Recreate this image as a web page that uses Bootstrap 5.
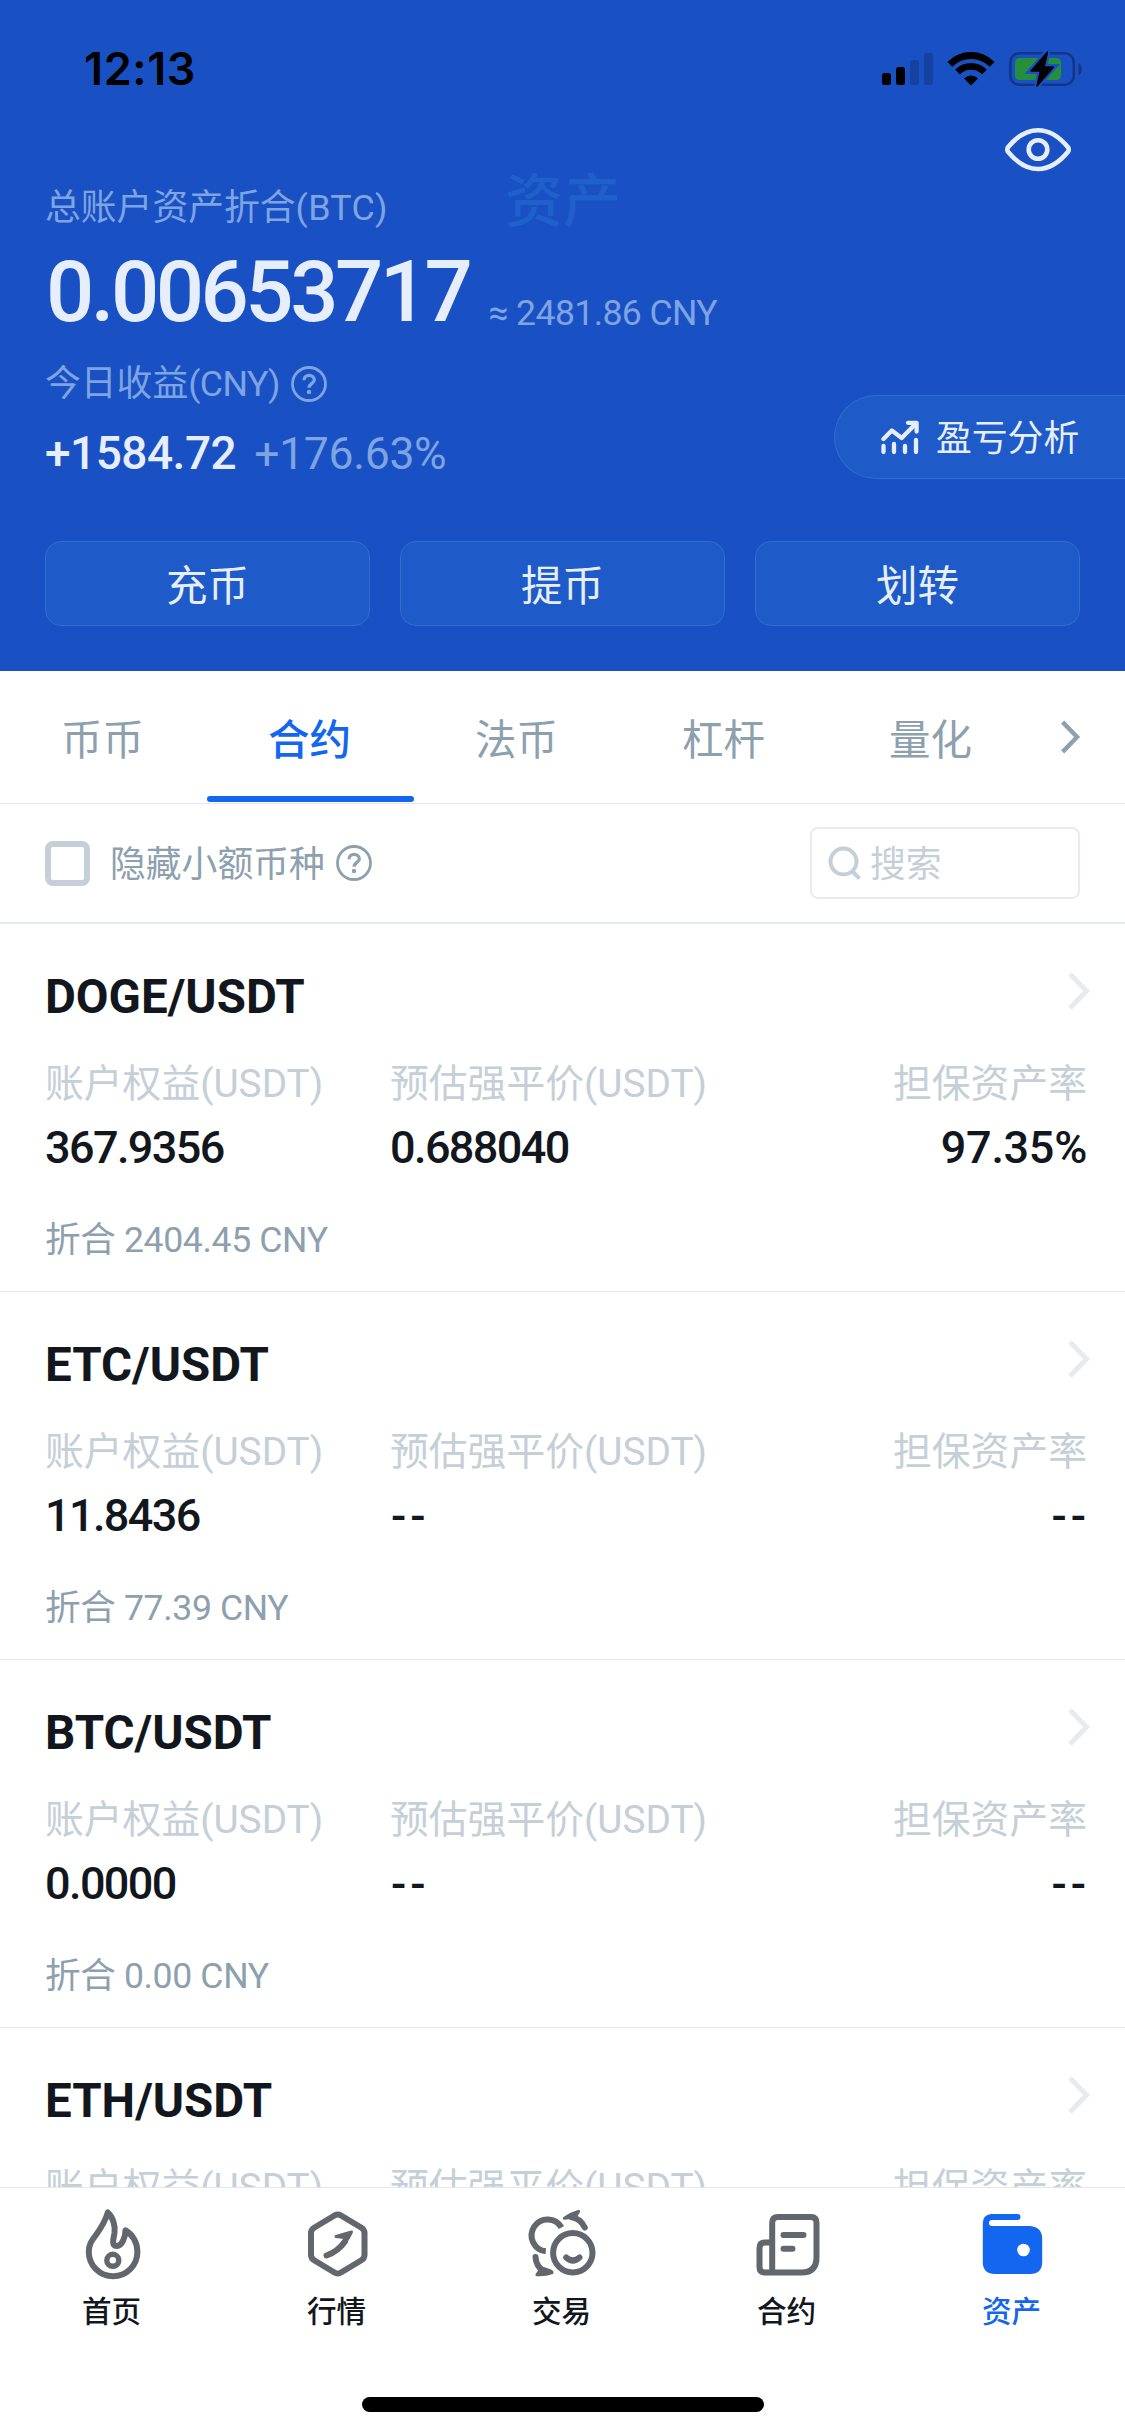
<!DOCTYPE html>
<html lang="zh-CN">
<head>
<meta charset="utf-8">
<meta name="viewport" content="width=device-width, initial-scale=1">
<title>资产</title>
<link rel="stylesheet" href="https://cdn.jsdelivr.net/npm/bootstrap@5.3.0/dist/css/bootstrap.min.css">
<script src="https://cdn.jsdelivr.net/npm/bootstrap@5.3.0/dist/js/bootstrap.bundle.min.js" defer></script>
<style>
body{width:1125px;height:2436px;overflow:hidden;background:#fff;font-family:Roboto,"Noto Sans CJK SC",sans-serif;line-height:1;color:#12161d}
svg{display:block;flex:none}
.hero{height:671px;background:#1951c4;color:#e6eefb;padding:0 45px}
.statusbar{height:120px;margin:0 -45px;padding:32px 41px 0 84px;color:#000}
.clock{font:600 45px/74px Inter,sans-serif;letter-spacing:.6px}
.dim{color:#7ea4e2}
.ghost{left:505px;top:170px;font-size:58px;line-height:64px;font-weight:500;color:#1f60ca}
.lbl{font-size:35.8px;line-height:46px}
.lbl .lat{letter-spacing:.3px}
.lbl .lat.tight{letter-spacing:-.6px}
.hero .first{padding-top:65px}
.total{font-size:85px;line-height:86px;font-weight:500;letter-spacing:-3.5px;padding-left:1px}
.total-row{margin-top:18px;height:86px}
.approx{font-size:35.6px;line-height:40px;letter-spacing:-.6px;margin:0 0 2px 19px}
.today{margin-top:26px;gap:11px}
.gain-row{margin-top:23px;gap:18px}
.gain{font-size:46px;font-weight:500;letter-spacing:-.5px}
.pct{font-size:44.5px;letter-spacing:-.3px}
.eye{right:52px;top:126px}
.pnl{right:0;top:395px;width:291px;height:84px;border:1.5px solid #326dd0;border-right:0;border-radius:42px 0 0 42px;background:#1e5bc9;padding-left:46px;font-size:35.8px;gap:16px}
.pnl span{padding-top:5px}
.acts{gap:30px;margin-top:64px}
.act,.act:hover{height:85px;border:1.5px solid #326dd0;border-radius:16px;background:#1e5bc9;color:#e6eefb;font-size:41.5px;padding:4px 0 0;line-height:82px}
.tabs{height:133px;border-bottom:1px solid #e3e7ea;padding-right:44px}
.tabs .nav-link{width:207px;height:132px;padding:0;line-height:140px;text-align:center;font-size:41.5px;color:#8da0ae;position:relative}
.tabs .nav-link span{margin-left:-2px}
.tabs .nav-link.active{color:#1366f0;font-weight:500}
.tabs .nav-link.active::after{content:"";position:absolute;left:0;right:0;bottom:1px;height:6px;border-radius:3px;background:#1366f0}
.tabs svg{color:#8da0ae}
.filter{height:120px;border-bottom:2px solid #e6ebef;padding:0 45px;color:#8da0ae}
.filter .lbl{padding-top:3px;margin:0 11px 0 20px}
.box{width:45px;height:45px;border:6px solid #c5cfd7;border-radius:8px}
.search{width:270px;height:72px;border:2px solid #e8ecf0;border-radius:8px;color:#c5cfd7;font-size:35.8px;padding-left:16px;gap:7px}
.search span{padding-top:5px}
.list{height:1263px;overflow:hidden}
.asset{height:368px;border-bottom:1px solid #e6eaed;padding:45px 38px 0 45px}
.asset .chev{margin:2px -4px 0 0;color:#e6ebef}
.pair{font-size:47.5px;font-weight:700;line-height:56px}
.caps{color:#c5cfd7;font-size:38.8px;line-height:48px;margin-top:35px}
.vals{font-size:45px;font-weight:500;line-height:52px;letter-spacing:-1.6px;margin-top:14px}
.vals .wide{letter-spacing:-.3px}
.vals .dash{letter-spacing:4px;margin-right:-3px;padding-left:1px}
.cny{color:#8da0ae;font-size:35.6px;line-height:46px;margin-top:43px;letter-spacing:-.35px}
.c1{width:345px}
.dock{height:249px;border-top:1px solid #e3e7ea;background:#fff}
.dock a{width:225px;color:#12161d;text-decoration:none;font-size:29.6px;font-weight:500;line-height:40px;padding:18px 2px 0 0;gap:10px}
.dock a svg{color:#61676c;margin-left:2px}
.dock a.on,.dock a.on svg{color:#1366f0}
.dock nav{height:209px}
.homebar{width:402px;height:15px;border-radius:8px;background:#000}
</style>
</head>
<body>
<svg width="0" height="0" class="position-absolute">
 <symbol id="q" viewBox="0 0 36 36"><circle cx="18" cy="18" r="16.5" fill="none" stroke="currentColor" stroke-width="2.8"/><path d="M13 14.200C13 7.800 23.300 8 23.300 14C23.300 17.300 18 17.600 18 21.800" fill="none" stroke="currentColor" stroke-width="3.300"/><circle cx="18" cy="26" r="2.200" fill="currentColor"/></symbol>
 <symbol id="chev" viewBox="0 0 24 40"><path d="M3 3L19.500 20L3 37" fill="none" stroke="currentColor" stroke-width="5"/></symbol>
</svg>

<header class="hero position-relative text-nowrap">
 <div class="statusbar d-flex justify-content-between">
  <div class="clock">12:13</div>
  <svg width="203" height="74" viewBox="0 0 203 74">
   <rect x="1" y="41" width="9" height="12" rx="2.500"/><rect x="15" y="35" width="9" height="18" rx="2.500"/>
   <g fill="#15429f"><rect x="29" y="28" width="9" height="25" rx="2.500"/><rect x="43" y="21" width="9" height="32" rx="2.500"/></g>
   <clipPath id="fan"><path d="M90 53.500L55 18.500V0H125V18.500Z"/></clipPath>
   <g clip-path="url(#fan)" fill="none" stroke="#000"><circle cx="90" cy="53" r="29.500" stroke-width="7"/><circle cx="90" cy="53" r="18.600" stroke-width="6.600"/><circle cx="90" cy="53" r="9.500" fill="#000" stroke="none"/></g>
   <rect x="129.300" y="21.200" width="63.500" height="31.600" rx="9" fill="none" stroke="#153685" stroke-width="2.600"/>
   <rect x="134" y="26" width="46" height="22" rx="4.500" fill="#258f3d"/>
   <path d="M197.500 31C202 33 202 41 197.500 43.500Z" fill="#153685"/>
   <path d="M166.500 20L150 39H159.500L156 54L172.500 35H163Z" stroke="#1951c4" stroke-width="6"/>
   <path d="M166.500 20L150 39H159.500L156 54L172.500 35H163Z" stroke="#000" stroke-width="1.500" stroke-linejoin="round"/>
  </svg>
 </div>
 <svg class="eye position-absolute" width="68" height="46" viewBox="0 0 68 46" fill="none" stroke="#e6eefb" stroke-width="4.600"><path d="M2.800 21.500Q1.800 23.500 2.800 25.500C13 38 24 43 33 43S53 38 63.200 25.500Q64.200 23.500 63.200 21.500C53 9 42 4.200 33 4.200S13 9 2.800 21.500Z" stroke-linejoin="round"/><circle cx="33" cy="23.500" r="9.300"/></svg>
 <div class="ghost position-absolute">资产</div>

 <div class="dim lbl first">总账户资产折合<span class="lat">(BTC)</span></div>
 <div class="total-row d-flex align-items-end"><span class="total">0.00653717</span><span class="approx dim">≈ 2481.86 CNY</span></div>
 <div class="dim lbl today d-flex align-items-center"><span>今日收益<span class="lat tight">(CNY)</span></span><svg width="36" height="36"><use href="#q"/></svg></div>
 <div class="gain-row d-flex align-items-baseline"><span class="gain">+1584.72</span><span class="pct dim">+176.63%</span></div>

 <div class="pnl position-absolute d-flex align-items-center">
  <svg width="39" height="36" viewBox="0 0 39 36" fill="none" stroke="currentColor" stroke-width="4.300" stroke-linecap="round" stroke-linejoin="round"><path d="M2.500 20L10.800 11.500L20.700 19L34.500 5"/><path d="M27 3.800H35.600V12.500"/><path d="M2.500 27V33M13 25V33M24 27V33M35 21V33"/></svg>
  <span>盈亏分析</span>
 </div>
 <div class="acts d-flex">
  <button class="act btn flex-fill">充币</button><button class="act btn flex-fill">提币</button><button class="act btn flex-fill">划转</button>
 </div>
</header>

<nav class="tabs nav flex-nowrap align-items-center justify-content-between">
 <div class="d-flex">
  <a class="nav-link"><span>币币</span></a><a class="nav-link active"><span>合约</span></a><a class="nav-link"><span>法币</span></a><a class="nav-link"><span>杠杆</span></a><a class="nav-link"><span>量化</span></a>
 </div>
 <svg width="21" height="36"><use href="#chev"/></svg>
</nav>

<div class="filter d-flex align-items-center justify-content-between">
 <div class="d-flex align-items-center"><span class="box"></span><span class="lbl">隐藏小额币种</span><svg width="36" height="36"><use href="#q"/></svg></div>
 <div class="search d-flex align-items-center"><svg width="35" height="35" viewBox="0 0 35 35" fill="none" stroke="currentColor" stroke-width="4"><circle cx="15.500" cy="15.500" r="13"/><path d="M24.500 25.500L31.500 32.500"/></svg><span>搜索</span></div>
</div>

<main class="list text-nowrap">
 <section class="asset">
  <div class="d-flex justify-content-between"><div class="pair">DOGE/USDT</div><svg class="chev" width="24" height="40"><use href="#chev"/></svg></div>
  <div class="caps d-flex"><div class="c1">账户权益(USDT)</div><div>预估强平价(USDT)</div><div class="ms-auto">担保资产率</div></div>
  <div class="vals d-flex"><div class="c1">367.9356</div><div>0.688040</div><div class="wide ms-auto">97.35%</div></div>
  <div class="cny">折合 2404.45 CNY</div>
 </section>
 <section class="asset">
  <div class="d-flex justify-content-between"><div class="pair">ETC/USDT</div><svg class="chev" width="24" height="40"><use href="#chev"/></svg></div>
  <div class="caps d-flex"><div class="c1">账户权益(USDT)</div><div>预估强平价(USDT)</div><div class="ms-auto">担保资产率</div></div>
  <div class="vals d-flex"><div class="c1">11.8436</div><div class="dash">--</div><div class="dash ms-auto">--</div></div>
  <div class="cny">折合 77.39 CNY</div>
 </section>
 <section class="asset">
  <div class="d-flex justify-content-between"><div class="pair">BTC/USDT</div><svg class="chev" width="24" height="40"><use href="#chev"/></svg></div>
  <div class="caps d-flex"><div class="c1">账户权益(USDT)</div><div>预估强平价(USDT)</div><div class="ms-auto">担保资产率</div></div>
  <div class="vals d-flex"><div class="c1">0.0000</div><div class="dash">--</div><div class="dash ms-auto">--</div></div>
  <div class="cny">折合 0.00 CNY</div>
 </section>
 <section class="asset">
  <div class="d-flex justify-content-between"><div class="pair">ETH/USDT</div><svg class="chev" width="24" height="40"><use href="#chev"/></svg></div>
  <div class="caps d-flex"><div class="c1">账户权益(USDT)</div><div>预估强平价(USDT)</div><div class="ms-auto">担保资产率</div></div>
 </section>
</main>

<footer class="dock">
 <nav class="d-flex">
  <a class="d-flex flex-column align-items-center"><svg width="76" height="76" viewBox="0 0 76 76" fill="none" stroke="currentColor" stroke-width="6" stroke-linejoin="round"><path d="M32.800 6.500C30 16 26 22 21 29C16 35.500 13.800 39 13.800 46A24.300 24.300 0 0 0 62.400 46C62.400 36 57 28 50.500 24.500C50.500 31 47 40 42 40C36 40 38.500 33 39.500 27C40.500 20 38 11 32.800 6.500Z"/><circle cx="37.800" cy="54.300" r="6" stroke-width="5.400"/></svg>首页</a>
  <a class="d-flex flex-column align-items-center"><svg width="76" height="76" viewBox="0 0 76 76" fill="none" stroke="currentColor" stroke-width="6" stroke-linejoin="round" stroke-linecap="round"><path d="M34.500 9.500Q37.800 7.500 41 9.500L61 21.500Q64.500 23.500 64.500 27V49Q64.500 52.500 61 54.500L41 66.500Q37.800 68.500 34.500 66.500L14.500 54.500Q11 52.500 11 49V27Q11 23.500 14.500 21.500Z"/><path d="M26.500 49.500C35 46.500 40.500 42 45 35.500"/><path d="M36 30.500L51.500 26Q49 32 45 37L44 31.500Z" fill="currentColor" stroke-width="3"/></svg>行情</a>
  <a class="d-flex flex-column align-items-center"><svg width="76" height="76" viewBox="0 0 76 76" fill="none" stroke="currentColor" stroke-width="6" stroke-linejoin="round"><circle cx="47.800" cy="46.700" r="19.700"/><path d="M36.500 21.500A16 16 0 1 0 20.800 45.300"/><g stroke-linecap="round"><path d="M41.200 51.500Q47.800 57.500 54.500 51.500"/><path d="M46 11Q55.500 12.500 59.800 21.500"/><path d="M10.500 51Q11 60.500 19.500 66"/><path d="M39.500 12.200Q45 8 53.500 5.500L50.500 10.500Z" fill="currentColor" stroke-width="3.200"/><path d="M12 68.600Q20 69.200 27 66.500L25.500 65L17 62Z" fill="currentColor" stroke-width="3.200"/></g></svg>交易</a>
  <a class="d-flex flex-column align-items-center"><svg width="76" height="76" viewBox="0 0 76 76" fill="none" stroke="currentColor" stroke-width="6" stroke-linejoin="round"><path d="M22.200 66.500V17Q22.200 11 28 11H61Q66.500 11 66.500 17V51.500Q66.500 66.500 51.500 66.500H15Q9.500 66.500 9.500 61V42Q9.500 36.500 15 36.500H22.200"/><path d="M33.500 29H53.500M33.500 42.700H42.500" stroke-linecap="round"/></svg>合约</a>
  <a class="on d-flex flex-column align-items-center"><svg width="76" height="76" viewBox="0 0 76 76" fill="currentColor"><path d="M16 8H42.500A3 3 0 0 1 42.500 14H17A3 3 0 0 0 17 20H55Q67.200 21 67.200 33V56Q67.200 68 55 68H20Q7.800 68 7.800 56V17Q7.800 9 16 8Z"/><circle cx="48.500" cy="44" r="6.300" fill="#fff"/></svg>资产</a>
 </nav>
 <div class="homebar mx-auto"></div>
</footer>
</body>
</html>
